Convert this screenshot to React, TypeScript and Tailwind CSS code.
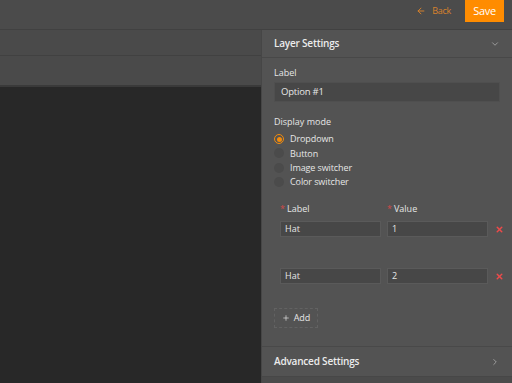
import { ArrowLeft, ChevronDown, ChevronRight, Plus, X } from "lucide-react";

const font = { fontFamily: '"Open Sans", "Noto Sans", sans-serif' };

const Radio = ({ label, checked }: { label: string; checked?: boolean }) => (
  <div className="flex items-center h-[14.3px] gap-[6px]">
    {checked ? (
      <span className="w-[10px] h-[10px] rounded-full border border-[#f28b0c] flex items-center justify-center">
        <span className="w-[5px] h-[5px] rounded-full bg-[#f28b0c]" />
      </span>
    ) : (
      <span className="w-[10px] h-[10px] rounded-full bg-[#4b4b4b]" />
    )}
    <span className="text-[9px] text-[#e6e6e6] tracking-[-0.1px]">{label}</span>
  </div>
);

const OptionRow = ({ label, value }: { label: string; value: string }) => (
  <div className="flex items-center ml-[6px]">
    <div className="shrink-0 w-[101px] h-[16px] bg-[#474747] border border-[#5a5a5a] px-[4px] flex items-center text-[9px] text-[#e6e6e6]">
      {label}
    </div>
    <div className="shrink-0 ml-[6px] w-[101px] h-[16px] bg-[#474747] border border-[#5a5a5a] px-[4px] flex items-center text-[9px] text-[#e6e6e6]">
      {value}
    </div>
    <X className="shrink-0 ml-[7px] text-[#ec4a4a]" size={9} strokeWidth={4} />
  </div>
);

export default function App() {
  return (
    <div style={font} className="w-[512px] h-[383px] flex flex-col bg-[#282828] overflow-hidden">
      {/* top bar */}
      <div className="h-[30px] shrink-0 bg-[#4b4b4b] border-b border-[#414141] flex justify-end items-start">
        <div className="flex items-center gap-[6px] mt-[5px] h-[12px] text-[#d9822b] text-[9px] tracking-[-0.3px]">
          <ArrowLeft size={10} strokeWidth={2.25} />
          <span>Back</span>
        </div>
        <button className="ml-[14px] mr-[8px] w-[39px] h-[22px] bg-[#ff8c00] text-white text-[11px] tracking-[-0.3px] flex items-center justify-center">
          Save
        </button>
      </div>

      <div className="flex flex-1 min-h-0">
        {/* left editor */}
        <div className="w-[261px] flex flex-col">
          <div className="h-[26px] bg-[#4a4a4a] border-b border-[#414141]" />
          <div className="h-[31px] bg-[#4a4a4a] border-b-2 border-[#3a3a3a]" />
          <div className="flex-1 bg-[#282828]" />
        </div>

        {/* right panel */}
        <div className="w-[251px] flex flex-col bg-[#4b4b4b] border-l border-[#464646]">
          <div className="bg-[#535353] flex flex-col">
            <div className="h-[28px] px-[12px] flex items-center justify-between border-b border-[#484848]">
              <span className="text-[10px] font-semibold text-[#ececec] tracking-[-0.2px]">Layer Settings</span>
              <ChevronDown size={10} className="text-[#a8a8a8]" />
            </div>

            <div className="px-[12px] pt-[8px] pb-[18px] flex flex-col">
              <span className="text-[9px] text-[#e6e6e6] h-[14px] leading-[14px]">Label</span>
              <div className="mt-[2px] h-[20px] bg-[#474747] border border-[#4f4f4f] px-[6px] flex items-center text-[9.5px] text-[#e6e6e6] tracking-[-0.2px]">
                Option #1
              </div>

              <span className="mt-[13px] text-[9px] text-[#e6e6e6] h-[14px] leading-[14px]">Display mode</span>
              <div className="mt-[3px] flex flex-col">
                <Radio label="Dropdown" checked />
                <Radio label="Button" />
                <Radio label="Image switcher" />
                <Radio label="Color switcher" />
              </div>

              <div className="mt-[14px] flex ml-[6px] text-[9px] text-[#e6e6e6] h-[12px] items-center">
                <span className="w-[107px]">
                  <span className="text-[#d04a4a] mr-[2px]">*</span>Label
                </span>
                <span>
                  <span className="text-[#d04a4a] mr-[2px]">*</span>Value
                </span>
              </div>
              <div className="mt-[6px] flex flex-col gap-[31px]">
                <OptionRow label="Hat" value="1" />
                <OptionRow label="Hat" value="2" />
              </div>

              <button className="mt-[24px] w-[44px] h-[20px] border border-dashed border-[#626262] flex items-center justify-center gap-[4px] text-[9px] text-[#e6e6e6]">
                <Plus size={8} />
                Add
              </button>
            </div>

            <div className="h-[31px] px-[12px] flex items-center justify-between border-t border-[#494949] border-b border-b-[#474747]">
              <span className="text-[10px] font-semibold text-[#ececec] tracking-[-0.2px]">Advanced Settings</span>
              <ChevronRight size={10} className="text-[#a8a8a8]" />
            </div>
          </div>
          <div className="flex-1" />
        </div>
      </div>
    </div>
  );
}
